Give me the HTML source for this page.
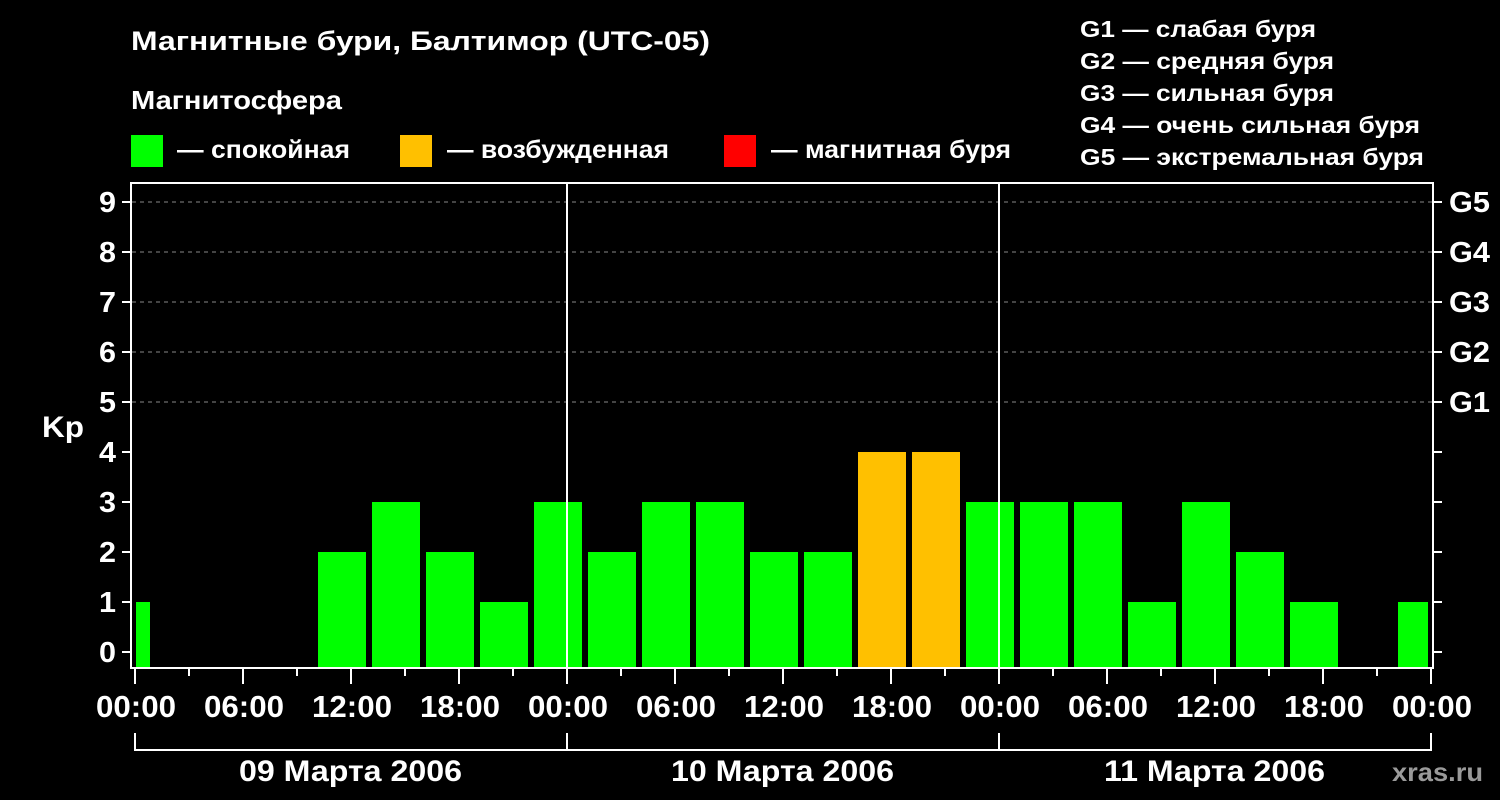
<!DOCTYPE html>
<html><head><meta charset="utf-8"><style>
html,body{margin:0;padding:0;background:#000;width:1500px;height:800px;overflow:hidden}
svg{display:block}
text{font-family:"Liberation Sans",Arial,sans-serif;font-weight:bold;fill:#fff}
</style></head><body>
<svg width="1500" height="800" viewBox="0 0 1500 800" xmlns="http://www.w3.org/2000/svg">
<text x="131" y="50" font-size="27" textLength="579" lengthAdjust="spacingAndGlyphs">Магнитные бури, Балтимор (UTC-05)</text>
<text x="131" y="109" font-size="26" textLength="211" lengthAdjust="spacingAndGlyphs">Магнитосфера</text>
<rect x="131" y="135" width="32" height="32" fill="#00ff00"/>
<text x="177" y="158" font-size="25" textLength="173" lengthAdjust="spacingAndGlyphs">— спокойная</text>
<rect x="400" y="135" width="32" height="32" fill="#ffc000"/>
<text x="447" y="158" font-size="25" textLength="222" lengthAdjust="spacingAndGlyphs">— возбужденная</text>
<rect x="724" y="135" width="32" height="32" fill="#ff0000"/>
<text x="771" y="158" font-size="25" textLength="240" lengthAdjust="spacingAndGlyphs">— магнитная буря</text>
<g font-size="23">
<text x="1080" y="37" textLength="236" lengthAdjust="spacingAndGlyphs">G1 — слабая буря</text>
<text x="1080" y="69" textLength="254" lengthAdjust="spacingAndGlyphs">G2 — средняя буря</text>
<text x="1080" y="101" textLength="254" lengthAdjust="spacingAndGlyphs">G3 — сильная буря</text>
<text x="1080" y="133" textLength="340" lengthAdjust="spacingAndGlyphs">G4 — очень сильная буря</text>
<text x="1080" y="165" textLength="344" lengthAdjust="spacingAndGlyphs">G5 — экстремальная буря</text>
</g>
<g stroke="#888" stroke-dasharray="4,4" stroke-width="1">
<line x1="132" y1="202" x2="1432" y2="202"/>
<line x1="132" y1="252" x2="1432" y2="252"/>
<line x1="132" y1="302" x2="1432" y2="302"/>
<line x1="132" y1="352" x2="1432" y2="352"/>
<line x1="132" y1="402" x2="1432" y2="402"/>
</g>
<g>
<rect x="136" y="602" width="14" height="66" fill="#00ff00"/>
<rect x="318" y="552" width="48" height="116" fill="#00ff00"/>
<rect x="372" y="502" width="48" height="166" fill="#00ff00"/>
<rect x="426" y="552" width="48" height="116" fill="#00ff00"/>
<rect x="480" y="602" width="48" height="66" fill="#00ff00"/>
<rect x="534" y="502" width="48" height="166" fill="#00ff00"/>
<rect x="588" y="552" width="48" height="116" fill="#00ff00"/>
<rect x="642" y="502" width="48" height="166" fill="#00ff00"/>
<rect x="696" y="502" width="48" height="166" fill="#00ff00"/>
<rect x="750" y="552" width="48" height="116" fill="#00ff00"/>
<rect x="804" y="552" width="48" height="116" fill="#00ff00"/>
<rect x="858" y="452" width="48" height="216" fill="#ffc000"/>
<rect x="912" y="452" width="48" height="216" fill="#ffc000"/>
<rect x="966" y="502" width="48" height="166" fill="#00ff00"/>
<rect x="1020" y="502" width="48" height="166" fill="#00ff00"/>
<rect x="1074" y="502" width="48" height="166" fill="#00ff00"/>
<rect x="1128" y="602" width="48" height="66" fill="#00ff00"/>
<rect x="1182" y="502" width="48" height="166" fill="#00ff00"/>
<rect x="1236" y="552" width="48" height="116" fill="#00ff00"/>
<rect x="1290" y="602" width="48" height="66" fill="#00ff00"/>
<rect x="1398" y="602" width="30" height="66" fill="#00ff00"/>
</g>
<g stroke="#fff" stroke-width="2" fill="none">
<rect x="131" y="183" width="1302" height="485"/>
<line x1="567" y1="183" x2="567" y2="668"/>
<line x1="999" y1="183" x2="999" y2="668"/>
<path d="M122 202h9M122 252h9M122 302h9M122 352h9M122 402h9M122 452h9M122 502h9M122 552h9M122 602h9M122 652h9"/>
<path d="M1433 202h9M1433 252h9M1433 302h9M1433 352h9M1433 402h9M1433 452h9M1433 502h9M1433 552h9M1433 602h9M1433 652h9"/>
<path d="M135 668v16M189 668v8M243 668v16M297 668v8M351 668v16M405 668v8M459 668v16M513 668v8M567 668v16M621 668v8M675 668v16M729 668v8M783 668v16M837 668v8M891 668v16M945 668v8M999 668v16M1053 668v8M1107 668v16M1161 668v8M1215 668v16M1269 668v8M1323 668v16M1377 668v8M1431 668v16"/>
<path d="M135 733v17h1296v-17M567 733v17M999 733v17"/>
</g>
<g font-size="29">
<text x="99" y="212" textLength="17" lengthAdjust="spacingAndGlyphs">9</text><text x="99" y="262" textLength="17" lengthAdjust="spacingAndGlyphs">8</text><text x="99" y="312" textLength="17" lengthAdjust="spacingAndGlyphs">7</text><text x="99" y="362" textLength="17" lengthAdjust="spacingAndGlyphs">6</text><text x="99" y="412" textLength="17" lengthAdjust="spacingAndGlyphs">5</text><text x="99" y="462" textLength="17" lengthAdjust="spacingAndGlyphs">4</text><text x="99" y="512" textLength="17" lengthAdjust="spacingAndGlyphs">3</text><text x="99" y="562" textLength="17" lengthAdjust="spacingAndGlyphs">2</text><text x="99" y="612" textLength="17" lengthAdjust="spacingAndGlyphs">1</text><text x="99" y="662" textLength="17" lengthAdjust="spacingAndGlyphs">0</text>
</g>
<text x="42" y="437" font-size="30" textLength="42" lengthAdjust="spacingAndGlyphs">Kp</text>
<g font-size="29">
<text x="1449" y="212" textLength="41" lengthAdjust="spacingAndGlyphs">G5</text><text x="1449" y="262" textLength="41" lengthAdjust="spacingAndGlyphs">G4</text><text x="1449" y="312" textLength="41" lengthAdjust="spacingAndGlyphs">G3</text><text x="1449" y="362" textLength="41" lengthAdjust="spacingAndGlyphs">G2</text><text x="1449" y="412" textLength="41" lengthAdjust="spacingAndGlyphs">G1</text>
</g>
<g font-size="31">
<text x="96" y="717" textLength="80" lengthAdjust="spacingAndGlyphs">00:00</text><text x="204" y="717" textLength="80" lengthAdjust="spacingAndGlyphs">06:00</text><text x="312" y="717" textLength="80" lengthAdjust="spacingAndGlyphs">12:00</text><text x="420" y="717" textLength="80" lengthAdjust="spacingAndGlyphs">18:00</text>
<text x="528" y="717" textLength="80" lengthAdjust="spacingAndGlyphs">00:00</text><text x="636" y="717" textLength="80" lengthAdjust="spacingAndGlyphs">06:00</text><text x="744" y="717" textLength="80" lengthAdjust="spacingAndGlyphs">12:00</text><text x="852" y="717" textLength="80" lengthAdjust="spacingAndGlyphs">18:00</text>
<text x="960" y="717" textLength="80" lengthAdjust="spacingAndGlyphs">00:00</text><text x="1068" y="717" textLength="80" lengthAdjust="spacingAndGlyphs">06:00</text><text x="1176" y="717" textLength="80" lengthAdjust="spacingAndGlyphs">12:00</text><text x="1284" y="717" textLength="80" lengthAdjust="spacingAndGlyphs">18:00</text>
<text x="1392" y="717" textLength="80" lengthAdjust="spacingAndGlyphs">00:00</text>
</g>
<g font-size="30">
<text x="239" y="781" textLength="223" lengthAdjust="spacingAndGlyphs">09 Марта 2006</text>
<text x="671" y="781" textLength="223" lengthAdjust="spacingAndGlyphs">10 Марта 2006</text>
<text x="1104" y="781" textLength="221" lengthAdjust="spacingAndGlyphs">11 Марта 2006</text>
</g>
<text x="1392" y="781" font-size="26" style="fill:#9a9a9a" textLength="91" lengthAdjust="spacingAndGlyphs">xras.ru</text>
</svg>
</body></html>
